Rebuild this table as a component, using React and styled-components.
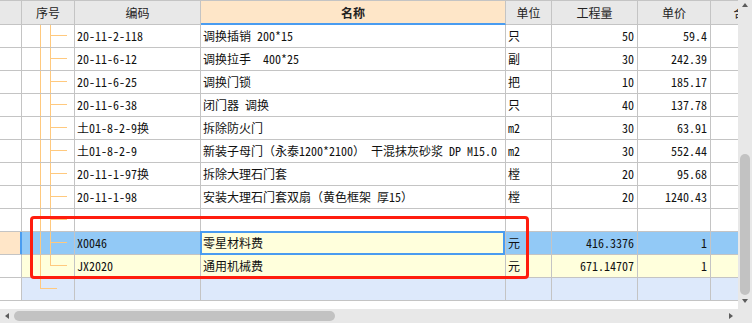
import React from "react";
import styled, { createGlobalStyle, css } from "styled-components";

const GlobalStyle = createGlobalStyle`
  html, body { margin: 0; padding: 0; background: #fff; }
  body {
    font-family: "Noto Sans Mono CJK SC", "Noto Sans CJK SC", "Liberation Mono", monospace;
    font-size: 12px;
    color: #111;
  }
  * { box-sizing: border-box; }
`;

const COLS = "22px 53px 126px 305px 46px 86px 73px 70px";
const LINE = "#c4c4c4";
const TREE = "#ffc97e";

const Frame = styled.div`
  width: 752px;
  height: 323px;
  display: grid;
  grid-template-columns: 738px 14px;
  grid-template-rows: 309px 14px;
`;

const Viewport = styled.div`
  position: relative;
  overflow: hidden;
  background: #fff;
`;

const Sheet = styled.div`
  width: 781px;
  display: flex;
  flex-direction: column;
`;

const HeaderRow = styled.div`
  display: grid;
  grid-template-columns: ${COLS};
  border-top: 1px solid ${LINE};
  background: #e8e8e8;
`;

const HeadCell = styled.div`
  height: 24px;
  line-height: 23px;
  text-align: center;
  white-space: nowrap;
  overflow: hidden;
  border-right: 1px solid ${LINE};
  border-bottom: 1px solid ${LINE};
  color: #222;
  ${(p) =>
    p.$active &&
    css`
      background: #fee6c8;
      font-weight: bold;
      border-bottom: 2px solid #4a9cf0;
    `}
`;

const rowBg = {
  plain: "#fff",
  selected: "#92c9f6",
  pending: "#ffffdc",
  tail: "#dde9fb",
};

const Row = styled.div`
  display: grid;
  grid-template-columns: ${COLS};
  background: ${(p) => rowBg[p.$kind]};
`;

const Cell = styled.div`
  position: relative;
  height: 23px;
  line-height: 22px;
  padding: 0 3px 0 2px;
  white-space: pre;
  overflow: visible;
  border-right: 1px solid ${LINE};
  border-bottom: 1px solid ${LINE};
  text-align: ${(p) => (p.$num ? "right" : "left")};
`;

const RowHead = styled(Cell)`
  background: ${(p) => (p.$current ? "#ffe6c8" : "#fff")};
  ${(p) =>
    p.$current &&
    css`
      box-shadow: inset -1px 0 #4a9cf0;
      border-right-color: #4a9cf0;
    `}
`;

/* guide lines of the tree: outer trunk, inner trunk, branch to the item */
const treeLayers = {
  mid: css`
    background-image: linear-gradient(${TREE}, ${TREE}), linear-gradient(${TREE}, ${TREE}),
      linear-gradient(${TREE}, ${TREE});
    background-size: 1px 100%, 1px 100%, 17px 1px;
    background-position: 18px 0, 28px 0, 28px 10px;
  `,
  last: css`
    background-image: linear-gradient(${TREE}, ${TREE}), linear-gradient(${TREE}, ${TREE}),
      linear-gradient(${TREE}, ${TREE});
    background-size: 1px 100%, 1px 11px, 17px 1px;
    background-position: 18px 0, 28px 0, 28px 10px;
  `,
  end: css`
    background-image: linear-gradient(${TREE}, ${TREE}), linear-gradient(${TREE}, ${TREE});
    background-size: 1px 11px, 17px 1px;
    background-position: 18px 0, 18px 10px;
  `,
};

const TreeCell = styled(Cell)`
  background-repeat: no-repeat;
  ${(p) => treeLayers[p.$branch]}
`;

const NameCell = styled(Cell)`
  ${(p) =>
    p.$editing &&
    css`
      background: #ffffdc;
      &::after {
        content: "";
        position: absolute;
        left: -1px;
        right: 0;
        top: -1px;
        bottom: -1px;
        border: 2px solid #4a9cf0;
        pointer-events: none;
      }
    `}
`;

const Highlight = styled.div`
  position: absolute;
  left: 30px;
  top: 216px;
  width: 499px;
  height: 63px;
  border: 3px solid #ff1d0e;
  border-radius: 4px;
  pointer-events: none;
`;

/* scrollbars */
const VScroll = styled.div`
  background: #e8e8e8;
  display: flex;
  flex-direction: column;
  align-items: center;
`;

const HScroll = styled.div`
  background: #e8e8e8;
  display: flex;
  align-items: center;
`;

const Corner = styled.div`
  background: #e8e8e8;
`;

const ArrowBox = styled.div`
  flex: 0 0 14px;
  width: 14px;
  height: 14px;
  display: flex;
  justify-content: center;
  align-items: ${(p) => (p.$dir === "up" ? "flex-start" : p.$dir === "down" ? "flex-end" : "center")};
  padding: ${(p) => (p.$dir === "up" ? "3px 0 0" : p.$dir === "down" ? "0 0 6px" : "0")};
`;

const arrowShapes = {
  up: css`
    border-left: 3.5px solid transparent;
    border-right: 3.5px solid transparent;
    border-bottom: 4px solid #5c5c5c;
  `,
  down: css`
    border-left: 3.5px solid transparent;
    border-right: 3.5px solid transparent;
    border-top: 4px solid #5c5c5c;
  `,
  left: css`
    border-top: 3.5px solid transparent;
    border-bottom: 3.5px solid transparent;
    border-right: 4px solid #5c5c5c;
  `,
  right: css`
    border-top: 3.5px solid transparent;
    border-bottom: 3.5px solid transparent;
    border-left: 4px solid #5c5c5c;
  `,
};

const Arrow = styled.span`
  width: 0;
  height: 0;
  ${(p) => arrowShapes[p.$dir]}
`;

const VTrack = styled.div`
  flex: 1;
  display: flex;
  flex-direction: column;
  align-items: center;
`;

const VThumb = styled.div`
  margin-top: auto;
  width: 10px;
  height: ${(p) => p.$size}px;
  border-radius: 5px;
  background: #c2c2c2;
`;

const HTrack = styled.div`
  flex: 1;
  height: 100%;
  display: flex;
  align-items: center;
`;

const HThumb = styled.div`
  width: ${(p) => p.$size}px;
  height: 10px;
  border-radius: 5px;
  background: #c2c2c2;
`;

const headers = ["", "序号", "编码", "名称", "单位", "工程量", "单价", "合价"];

const items = [
  { code: "20-11-2-118", name: "调换插销 200*15", unit: "只", qty: "50", price: "59.4" },
  { code: "20-11-6-12", name: "调换拉手  400*25", unit: "副", qty: "30", price: "242.39" },
  { code: "20-11-6-25", name: "调换门锁", unit: "把", qty: "10", price: "185.17" },
  { code: "20-11-6-38", name: "闭门器 调换", unit: "只", qty: "40", price: "137.78" },
  { code: "土01-8-2-9换", name: "拆除防火门", unit: "m2", qty: "30", price: "63.91" },
  {
    code: "土01-8-2-9",
    name: "新装子母门（永泰1200*2100） 干混抹灰砂浆 DP M15.0",
    unit: "m2",
    qty: "30",
    price: "552.44",
  },
  { code: "20-11-1-97换", name: "拆除大理石门套", unit: "樘", qty: "20", price: "95.68" },
  { code: "20-11-1-98", name: "安装大理石门套双扇（黄色框架 厚15）", unit: "樘", qty: "20", price: "1240.43" },
  { code: "", name: "", unit: "", qty: "", price: "" },
  { code: "X0046", name: "零星材料费", unit: "元", qty: "416.3376", price: "1", kind: "selected" },
  { code: "JX2020", name: "通用机械费", unit: "元", qty: "671.14707", price: "1", kind: "pending", branch: "last" },
  { code: "", name: "", unit: "", qty: "", price: "", kind: "tail", branch: "end" },
];

function ItemRow({ item }) {
  const kind = item.kind || "plain";
  const selected = kind === "selected";
  return (
    <Row $kind={kind}>
      <RowHead $current={selected} />
      <TreeCell $branch={item.branch || "mid"} />
      <Cell>{item.code}</Cell>
      <NameCell $editing={selected}>{item.name}</NameCell>
      <Cell>{item.unit}</Cell>
      <Cell $num>{item.qty}</Cell>
      <Cell $num>{item.price}</Cell>
      <Cell />
    </Row>
  );
}

export default function App() {
  return (
    <>
      <GlobalStyle />
      <Frame>
        <Viewport>
          <Sheet>
            <HeaderRow>
              {headers.map((h, i) => (
                <HeadCell key={i} $active={h === "名称"}>
                  {h}
                </HeadCell>
              ))}
            </HeaderRow>
            {items.map((item, i) => (
              <ItemRow key={i} item={item} />
            ))}
          </Sheet>
          <Highlight />
        </Viewport>
        <VScroll>
          <ArrowBox $dir="up">
            <Arrow $dir="up" />
          </ArrowBox>
          <VTrack>
            <VThumb $size={141} />
          </VTrack>
          <ArrowBox $dir="down">
            <Arrow $dir="down" />
          </ArrowBox>
        </VScroll>
        <HScroll>
          <ArrowBox $dir="left">
            <Arrow $dir="left" />
          </ArrowBox>
          <HTrack>
            <HThumb $size={321} />
          </HTrack>
          <ArrowBox $dir="right">
            <Arrow $dir="right" />
          </ArrowBox>
        </HScroll>
        <Corner />
      </Frame>
    </>
  );
}
